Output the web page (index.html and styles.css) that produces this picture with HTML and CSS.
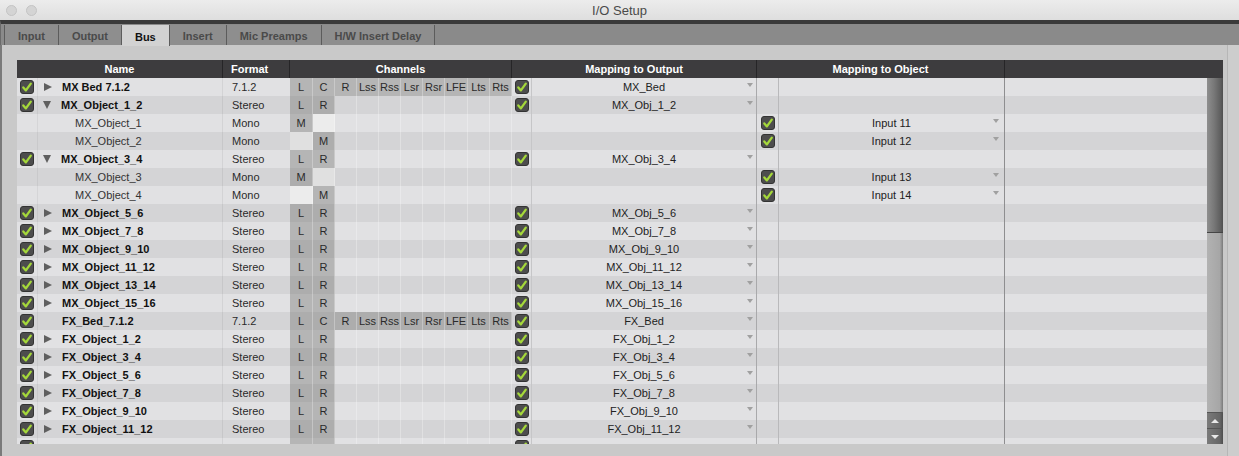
FILE: index.html
```html
<!DOCTYPE html>
<html>
<head>
<meta charset="utf-8">
<link rel="stylesheet" href="styles.css">
</head>
<body>
<svg width="0" height="0" class="defs">
  <defs>
    <symbol id="chk" viewBox="0 0 14 14">
      <rect x="0.5" y="0.5" width="13" height="13" rx="2.5" fill="#4d4d4d" stroke="#333"/>
      <path d="M3.3 7.4 L5.9 10.4 L10.8 3.6" fill="none" stroke="#a5d83a" stroke-width="2.3" stroke-linecap="round" stroke-linejoin="round"/>
    </symbol>
  </defs>
</svg>
<div class="titlebar">
  <div class="lights"><span class="light"></span><span class="light"></span></div>
  <div class="title">I/O Setup</div>
  <div class="lights-spacer"></div>
</div>
<div class="tabstrip">
  <div class="tab first">Input</div>
  <div class="tab">Output</div>
  <div class="tab active">Bus</div>
  <div class="tab">Insert</div>
  <div class="tab">Mic Preamps</div>
  <div class="tab">H/W Insert Delay</div>
</div>
<div class="panel">
  <div class="table">
    <div class="thead">
      <div class="h center">Name</div>
      <div class="h left">Format</div>
      <div class="h center">Channels</div>
      <div class="h center">Mapping to Output</div>
      <div class="h center">Mapping to Object</div>
      <div class="h"></div>
    </div>
    <div class="tbody">
      <div class="rows">
        <!-- 1 -->
        <div class="row">
          <div class="c chk"><svg class="cb"><use href="#chk"/></svg></div>
          <div class="c name"><span class="tri r"></span><b>MX Bed 7.1.2</b></div>
          <div class="c fmt">7.1.2</div>
          <div class="c ch on">L</div><div class="c ch on">C</div><div class="c ch on">R</div><div class="c ch on">Lss</div><div class="c ch on">Rss</div><div class="c ch on">Lsr</div><div class="c ch on">Rsr</div><div class="c ch on">LFE</div><div class="c ch on">Lts</div><div class="c ch on">Rts</div>
          <div class="c ochk"><svg class="cb"><use href="#chk"/></svg></div>
          <div class="c oname">MX_Bed<i class="dd"></i></div>
          <div class="c bchk"></div><div class="c bname"></div><div class="c rest"></div>
        </div>
        <!-- 2 -->
        <div class="row">
          <div class="c chk"><svg class="cb"><use href="#chk"/></svg></div>
          <div class="c name"><span class="tri d"></span><b>MX_Object_1_2</b></div>
          <div class="c fmt">Stereo</div>
          <div class="c ch on">L</div><div class="c ch on">R</div><div class="c ch"></div><div class="c ch"></div><div class="c ch"></div><div class="c ch"></div><div class="c ch"></div><div class="c ch"></div><div class="c ch"></div><div class="c ch"></div>
          <div class="c ochk"><svg class="cb"><use href="#chk"/></svg></div>
          <div class="c oname">MX_Obj_1_2<i class="dd"></i></div>
          <div class="c bchk"></div><div class="c bname"></div><div class="c rest"></div>
        </div>
        <!-- 3 -->
        <div class="row">
          <div class="c chk"></div>
          <div class="c name child">MX_Object_1</div>
          <div class="c fmt">Mono</div>
          <div class="c ch on">M</div><div class="c ch blank"></div><div class="c ch"></div><div class="c ch"></div><div class="c ch"></div><div class="c ch"></div><div class="c ch"></div><div class="c ch"></div><div class="c ch"></div><div class="c ch"></div>
          <div class="c ochk"></div>
          <div class="c oname"></div>
          <div class="c bchk"><svg class="cb"><use href="#chk"/></svg></div><div class="c bname">Input 11<i class="dd"></i></div><div class="c rest"></div>
        </div>
        <!-- 4 -->
        <div class="row">
          <div class="c chk"></div>
          <div class="c name child">MX_Object_2</div>
          <div class="c fmt">Mono</div>
          <div class="c ch blank"></div><div class="c ch on">M</div><div class="c ch"></div><div class="c ch"></div><div class="c ch"></div><div class="c ch"></div><div class="c ch"></div><div class="c ch"></div><div class="c ch"></div><div class="c ch"></div>
          <div class="c ochk"></div>
          <div class="c oname"></div>
          <div class="c bchk"><svg class="cb"><use href="#chk"/></svg></div><div class="c bname">Input 12<i class="dd"></i></div><div class="c rest"></div>
        </div>
        <!-- 5 -->
        <div class="row">
          <div class="c chk"><svg class="cb"><use href="#chk"/></svg></div>
          <div class="c name"><span class="tri d"></span><b>MX_Object_3_4</b></div>
          <div class="c fmt">Stereo</div>
          <div class="c ch on">L</div><div class="c ch on">R</div><div class="c ch"></div><div class="c ch"></div><div class="c ch"></div><div class="c ch"></div><div class="c ch"></div><div class="c ch"></div><div class="c ch"></div><div class="c ch"></div>
          <div class="c ochk"><svg class="cb"><use href="#chk"/></svg></div>
          <div class="c oname">MX_Obj_3_4<i class="dd"></i></div>
          <div class="c bchk"></div><div class="c bname"></div><div class="c rest"></div>
        </div>
        <!-- 6 -->
        <div class="row">
          <div class="c chk"></div>
          <div class="c name child">MX_Object_3</div>
          <div class="c fmt">Mono</div>
          <div class="c ch on">M</div><div class="c ch blank"></div><div class="c ch"></div><div class="c ch"></div><div class="c ch"></div><div class="c ch"></div><div class="c ch"></div><div class="c ch"></div><div class="c ch"></div><div class="c ch"></div>
          <div class="c ochk"></div>
          <div class="c oname"></div>
          <div class="c bchk"><svg class="cb"><use href="#chk"/></svg></div><div class="c bname">Input 13<i class="dd"></i></div><div class="c rest"></div>
        </div>
        <!-- 7 -->
        <div class="row">
          <div class="c chk"></div>
          <div class="c name child">MX_Object_4</div>
          <div class="c fmt">Mono</div>
          <div class="c ch blank"></div><div class="c ch on">M</div><div class="c ch"></div><div class="c ch"></div><div class="c ch"></div><div class="c ch"></div><div class="c ch"></div><div class="c ch"></div><div class="c ch"></div><div class="c ch"></div>
          <div class="c ochk"></div>
          <div class="c oname"></div>
          <div class="c bchk"><svg class="cb"><use href="#chk"/></svg></div><div class="c bname">Input 14<i class="dd"></i></div><div class="c rest"></div>
        </div>
        <!-- 8 -->
        <div class="row">
          <div class="c chk"><svg class="cb"><use href="#chk"/></svg></div>
          <div class="c name"><span class="tri r"></span><b>MX_Object_5_6</b></div>
          <div class="c fmt">Stereo</div>
          <div class="c ch on">L</div><div class="c ch on">R</div><div class="c ch"></div><div class="c ch"></div><div class="c ch"></div><div class="c ch"></div><div class="c ch"></div><div class="c ch"></div><div class="c ch"></div><div class="c ch"></div>
          <div class="c ochk"><svg class="cb"><use href="#chk"/></svg></div>
          <div class="c oname">MX_Obj_5_6<i class="dd"></i></div>
          <div class="c bchk"></div><div class="c bname"></div><div class="c rest"></div>
        </div>
        <!-- 9 -->
        <div class="row">
          <div class="c chk"><svg class="cb"><use href="#chk"/></svg></div>
          <div class="c name"><span class="tri r"></span><b>MX_Object_7_8</b></div>
          <div class="c fmt">Stereo</div>
          <div class="c ch on">L</div><div class="c ch on">R</div><div class="c ch"></div><div class="c ch"></div><div class="c ch"></div><div class="c ch"></div><div class="c ch"></div><div class="c ch"></div><div class="c ch"></div><div class="c ch"></div>
          <div class="c ochk"><svg class="cb"><use href="#chk"/></svg></div>
          <div class="c oname">MX_Obj_7_8<i class="dd"></i></div>
          <div class="c bchk"></div><div class="c bname"></div><div class="c rest"></div>
        </div>
        <!-- 10 -->
        <div class="row">
          <div class="c chk"><svg class="cb"><use href="#chk"/></svg></div>
          <div class="c name"><span class="tri r"></span><b>MX_Object_9_10</b></div>
          <div class="c fmt">Stereo</div>
          <div class="c ch on">L</div><div class="c ch on">R</div><div class="c ch"></div><div class="c ch"></div><div class="c ch"></div><div class="c ch"></div><div class="c ch"></div><div class="c ch"></div><div class="c ch"></div><div class="c ch"></div>
          <div class="c ochk"><svg class="cb"><use href="#chk"/></svg></div>
          <div class="c oname">MX_Obj_9_10<i class="dd"></i></div>
          <div class="c bchk"></div><div class="c bname"></div><div class="c rest"></div>
        </div>
        <!-- 11 -->
        <div class="row">
          <div class="c chk"><svg class="cb"><use href="#chk"/></svg></div>
          <div class="c name"><span class="tri r"></span><b>MX_Object_11_12</b></div>
          <div class="c fmt">Stereo</div>
          <div class="c ch on">L</div><div class="c ch on">R</div><div class="c ch"></div><div class="c ch"></div><div class="c ch"></div><div class="c ch"></div><div class="c ch"></div><div class="c ch"></div><div class="c ch"></div><div class="c ch"></div>
          <div class="c ochk"><svg class="cb"><use href="#chk"/></svg></div>
          <div class="c oname">MX_Obj_11_12<i class="dd"></i></div>
          <div class="c bchk"></div><div class="c bname"></div><div class="c rest"></div>
        </div>
        <!-- 12 -->
        <div class="row">
          <div class="c chk"><svg class="cb"><use href="#chk"/></svg></div>
          <div class="c name"><span class="tri r"></span><b>MX_Object_13_14</b></div>
          <div class="c fmt">Stereo</div>
          <div class="c ch on">L</div><div class="c ch on">R</div><div class="c ch"></div><div class="c ch"></div><div class="c ch"></div><div class="c ch"></div><div class="c ch"></div><div class="c ch"></div><div class="c ch"></div><div class="c ch"></div>
          <div class="c ochk"><svg class="cb"><use href="#chk"/></svg></div>
          <div class="c oname">MX_Obj_13_14<i class="dd"></i></div>
          <div class="c bchk"></div><div class="c bname"></div><div class="c rest"></div>
        </div>
        <!-- 13 -->
        <div class="row">
          <div class="c chk"><svg class="cb"><use href="#chk"/></svg></div>
          <div class="c name"><span class="tri r"></span><b>MX_Object_15_16</b></div>
          <div class="c fmt">Stereo</div>
          <div class="c ch on">L</div><div class="c ch on">R</div><div class="c ch"></div><div class="c ch"></div><div class="c ch"></div><div class="c ch"></div><div class="c ch"></div><div class="c ch"></div><div class="c ch"></div><div class="c ch"></div>
          <div class="c ochk"><svg class="cb"><use href="#chk"/></svg></div>
          <div class="c oname">MX_Obj_15_16<i class="dd"></i></div>
          <div class="c bchk"></div><div class="c bname"></div><div class="c rest"></div>
        </div>
        <!-- 14 -->
        <div class="row">
          <div class="c chk"><svg class="cb"><use href="#chk"/></svg></div>
          <div class="c name"><span class="tri none"></span><b>FX_Bed_7.1.2</b></div>
          <div class="c fmt">7.1.2</div>
          <div class="c ch on">L</div><div class="c ch on">C</div><div class="c ch on">R</div><div class="c ch on">Lss</div><div class="c ch on">Rss</div><div class="c ch on">Lsr</div><div class="c ch on">Rsr</div><div class="c ch on">LFE</div><div class="c ch on">Lts</div><div class="c ch on">Rts</div>
          <div class="c ochk"><svg class="cb"><use href="#chk"/></svg></div>
          <div class="c oname">FX_Bed<i class="dd"></i></div>
          <div class="c bchk"></div><div class="c bname"></div><div class="c rest"></div>
        </div>
        <!-- 15 -->
        <div class="row">
          <div class="c chk"><svg class="cb"><use href="#chk"/></svg></div>
          <div class="c name"><span class="tri r"></span><b>FX_Object_1_2</b></div>
          <div class="c fmt">Stereo</div>
          <div class="c ch on">L</div><div class="c ch on">R</div><div class="c ch"></div><div class="c ch"></div><div class="c ch"></div><div class="c ch"></div><div class="c ch"></div><div class="c ch"></div><div class="c ch"></div><div class="c ch"></div>
          <div class="c ochk"><svg class="cb"><use href="#chk"/></svg></div>
          <div class="c oname">FX_Obj_1_2<i class="dd"></i></div>
          <div class="c bchk"></div><div class="c bname"></div><div class="c rest"></div>
        </div>
        <!-- 16 -->
        <div class="row">
          <div class="c chk"><svg class="cb"><use href="#chk"/></svg></div>
          <div class="c name"><span class="tri r"></span><b>FX_Object_3_4</b></div>
          <div class="c fmt">Stereo</div>
          <div class="c ch on">L</div><div class="c ch on">R</div><div class="c ch"></div><div class="c ch"></div><div class="c ch"></div><div class="c ch"></div><div class="c ch"></div><div class="c ch"></div><div class="c ch"></div><div class="c ch"></div>
          <div class="c ochk"><svg class="cb"><use href="#chk"/></svg></div>
          <div class="c oname">FX_Obj_3_4<i class="dd"></i></div>
          <div class="c bchk"></div><div class="c bname"></div><div class="c rest"></div>
        </div>
        <!-- 17 -->
        <div class="row">
          <div class="c chk"><svg class="cb"><use href="#chk"/></svg></div>
          <div class="c name"><span class="tri r"></span><b>FX_Object_5_6</b></div>
          <div class="c fmt">Stereo</div>
          <div class="c ch on">L</div><div class="c ch on">R</div><div class="c ch"></div><div class="c ch"></div><div class="c ch"></div><div class="c ch"></div><div class="c ch"></div><div class="c ch"></div><div class="c ch"></div><div class="c ch"></div>
          <div class="c ochk"><svg class="cb"><use href="#chk"/></svg></div>
          <div class="c oname">FX_Obj_5_6<i class="dd"></i></div>
          <div class="c bchk"></div><div class="c bname"></div><div class="c rest"></div>
        </div>
        <!-- 18 -->
        <div class="row">
          <div class="c chk"><svg class="cb"><use href="#chk"/></svg></div>
          <div class="c name"><span class="tri r"></span><b>FX_Object_7_8</b></div>
          <div class="c fmt">Stereo</div>
          <div class="c ch on">L</div><div class="c ch on">R</div><div class="c ch"></div><div class="c ch"></div><div class="c ch"></div><div class="c ch"></div><div class="c ch"></div><div class="c ch"></div><div class="c ch"></div><div class="c ch"></div>
          <div class="c ochk"><svg class="cb"><use href="#chk"/></svg></div>
          <div class="c oname">FX_Obj_7_8<i class="dd"></i></div>
          <div class="c bchk"></div><div class="c bname"></div><div class="c rest"></div>
        </div>
        <!-- 19 -->
        <div class="row">
          <div class="c chk"><svg class="cb"><use href="#chk"/></svg></div>
          <div class="c name"><span class="tri r"></span><b>FX_Object_9_10</b></div>
          <div class="c fmt">Stereo</div>
          <div class="c ch on">L</div><div class="c ch on">R</div><div class="c ch"></div><div class="c ch"></div><div class="c ch"></div><div class="c ch"></div><div class="c ch"></div><div class="c ch"></div><div class="c ch"></div><div class="c ch"></div>
          <div class="c ochk"><svg class="cb"><use href="#chk"/></svg></div>
          <div class="c oname">FX_Obj_9_10<i class="dd"></i></div>
          <div class="c bchk"></div><div class="c bname"></div><div class="c rest"></div>
        </div>
        <!-- 20 -->
        <div class="row">
          <div class="c chk"><svg class="cb"><use href="#chk"/></svg></div>
          <div class="c name"><span class="tri r"></span><b>FX_Object_11_12</b></div>
          <div class="c fmt">Stereo</div>
          <div class="c ch on">L</div><div class="c ch on">R</div><div class="c ch"></div><div class="c ch"></div><div class="c ch"></div><div class="c ch"></div><div class="c ch"></div><div class="c ch"></div><div class="c ch"></div><div class="c ch"></div>
          <div class="c ochk"><svg class="cb"><use href="#chk"/></svg></div>
          <div class="c oname">FX_Obj_11_12<i class="dd"></i></div>
          <div class="c bchk"></div><div class="c bname"></div><div class="c rest"></div>
        </div>
        <!-- 21 (partially scrolled out of view) -->
        <div class="row">
          <div class="c chk"><svg class="cb"><use href="#chk"/></svg></div>
          <div class="c name"></div>
          <div class="c fmt"></div>
          <div class="c ch on"></div><div class="c ch on"></div><div class="c ch"></div><div class="c ch"></div><div class="c ch"></div><div class="c ch"></div><div class="c ch"></div><div class="c ch"></div><div class="c ch"></div><div class="c ch"></div>
          <div class="c ochk"><svg class="cb"><use href="#chk"/></svg></div>
          <div class="c oname"></div>
          <div class="c bchk"></div><div class="c bname"></div><div class="c rest"></div>
        </div>
      </div>
      <div class="scrollbar">
        <div class="thumb"></div>
        <div class="track"></div>
        <div class="sbtn"><span class="arr up"></span></div>
        <div class="sbtn"><span class="arr down"></span></div>
      </div>
    </div>
  </div>
  <div class="edge"></div>
</div>
</body>
</html>
```

FILE: styles.css
```css
* { box-sizing: border-box; margin: 0; padding: 0; }

html, body {
  width: 1239px;
  height: 456px;
  overflow: hidden;
}

body {
  font-family: "Liberation Sans", Arial, sans-serif;
  background: #c9c9c9;
}

.defs { position: absolute; width: 0; height: 0; }

/* Title bar */
.titlebar {
  height: 20px;
  display: flex;
  align-items: center;
  background: linear-gradient(#ececec, #dedede);
}
.lights {
  width: 40px;
  display: flex;
  gap: 9px;
  padding-left: 6px;
  padding-top: 1px;
}
.light {
  width: 11px;
  height: 11px;
  border-radius: 50%;
  background: #d4d4d4;
  border: 1px solid #c4c4c4;
}
.title {
  flex: 1;
  text-align: center;
  font-size: 13px;
  color: #4a4a4a;
}
.lights-spacer { width: 40px; }

/* Tabs */
.tabstrip {
  height: 25px;
  border-top: 4px solid #3a3a3a;
  background: #8a8a8a;
  display: flex;
  padding: 1px 0 0 3px;
  border-left: 1px solid #6a6a6a;
}
.tab {
  height: 20px;
  padding: 2px 13px 0;
  display: flex;
  align-items: center;
  font-size: 11px;
  font-weight: bold;
  color: #4a4a4a;
  background: #8e8e8e;
  border-right: 1px solid #5c5c5c;
}
.tab.first { border-left: 1px solid #5c5c5c; }
.tab.active {
  background: #d2d2d2;
  color: #111;
  height: 21px;
}

/* Panel */
.panel {
  height: 411px;
  display: flex;
  padding: 15px 0 0 15px;
  border-left: 2px solid #7a7a7a;
  background: #c9c9c9;
}
.edge {
  flex: 1;
  margin-top: -15px;
  margin-left: 4px;
  border-left: 1px solid #b6b6b6;
  background: #cdcdcd;
}

.table {
  width: 1206px;
  height: 384px;
  display: flex;
  flex-direction: column;
}

.thead {
  height: 18px;
  flex: none;
  background: #3d3c3e;
  display: grid;
  grid-template-columns: 206px 67px 222px 245px 248px 1fr;
  color: #fff;
  font-size: 11px;
  font-weight: bold;
}
.h {
  display: flex;
  align-items: center;
  border-right: 1px solid #262527;
}
.h:last-child { border-right: none; }
.h.center { justify-content: center; }
.h.left { padding-left: 8px; }

.tbody {
  flex: 1;
  display: flex;
  overflow: hidden;
}
.rows {
  width: 1190px;
  overflow: hidden;
}

.row {
  display: grid;
  grid-template-columns: 21px 185px 67px 23px 22px 22px 22px 22px 22px 22px 23px 22px 22px 20px 225px 22px 226px 202px;
  height: 18px;
  background: #e1e1e3;
  font-size: 11px;
  color: #222;
}
.row:nth-child(even) { background: #d4d4d6; }

.c {
  height: 18px;
  display: flex;
  align-items: center;
  position: relative;
  white-space: nowrap;
}

.chk {
  justify-content: center;
  border-right: 1px solid rgba(0, 0, 0, 0.05);
}
.cb { width: 14px; height: 14px; display: block; }

.name {
  padding-left: 6px;
  border-right: 1px solid rgba(0, 0, 0, 0.06);
}
.name b { font-weight: bold; color: #111; }
.name.child { padding-left: 37px; color: #333; }

.tri { display: inline-block; width: 0; height: 0; margin-right: 10px; flex: none; }
.tri.r {
  border-left: 8px solid #5f5f5f;
  border-top: 4px solid transparent;
  border-bottom: 4px solid transparent;
}
.tri.d {
  margin-left: -1px;
  margin-right: 10px;
  border-top: 8px solid #5f5f5f;
  border-left: 4.5px solid transparent;
  border-right: 4.5px solid transparent;
}
.tri.none { width: 8px; }

.fmt { padding-left: 9px; color: #2a2a2a; }

.ch {
  justify-content: center;
  color: #2a2a2a;
  border-right: 1px solid rgba(255, 255, 255, 0.28);
}
.ch.on { background: #b5b5b5; }
.row:nth-child(even) .ch.on { background: #adadad; }
.ch.blank { background: #ececec; }
.row:nth-child(even) .ch.blank { background: #e0e0e0; }

.ochk {
  justify-content: center;
  border-right: 1px solid #c6c6c8;
}
.oname, .bname {
  justify-content: center;
  color: #222;
}
.oname { border-right: 1px solid #a9a9ab; }
.bchk {
  justify-content: center;
  border-right: 1px solid #b9b9bb;
}
.bname { border-right: 1px solid #8e8e90; }

.dd {
  position: absolute;
  top: 5px;
  right: 3px;
  width: 0;
  height: 0;
  border-left: 3px solid transparent;
  border-right: 3px solid transparent;
  border-top: 4px solid #a0a0a0;
}
.bname .dd { right: 5px; }

/* Scrollbar */
.scrollbar {
  width: 16px;
  display: flex;
  flex-direction: column;
}
.thumb {
  height: 155px;
  background: linear-gradient(to right, #8e8e8e, #777 45%, #5e5e5e 85%, #4f4f4f);
  border-bottom: 1px solid #454545;
}
.track {
  flex: 1;
  background: linear-gradient(to right, #b2b2b2, #a6a6a6 80%, #7a7a7a);
}
.sbtn {
  height: 16px;
  background: linear-gradient(to right, #7a7a7a, #666 80%, #4e4e4e);
  border-top: 1px solid #555;
  display: flex;
  align-items: center;
  justify-content: center;
}
.arr { width: 0; height: 0; border-left: 4px solid transparent; border-right: 4px solid transparent; }
.arr.up { border-bottom: 4px solid #e8e8e8; }
.arr.down { border-top: 4px solid #e8e8e8; }
```
